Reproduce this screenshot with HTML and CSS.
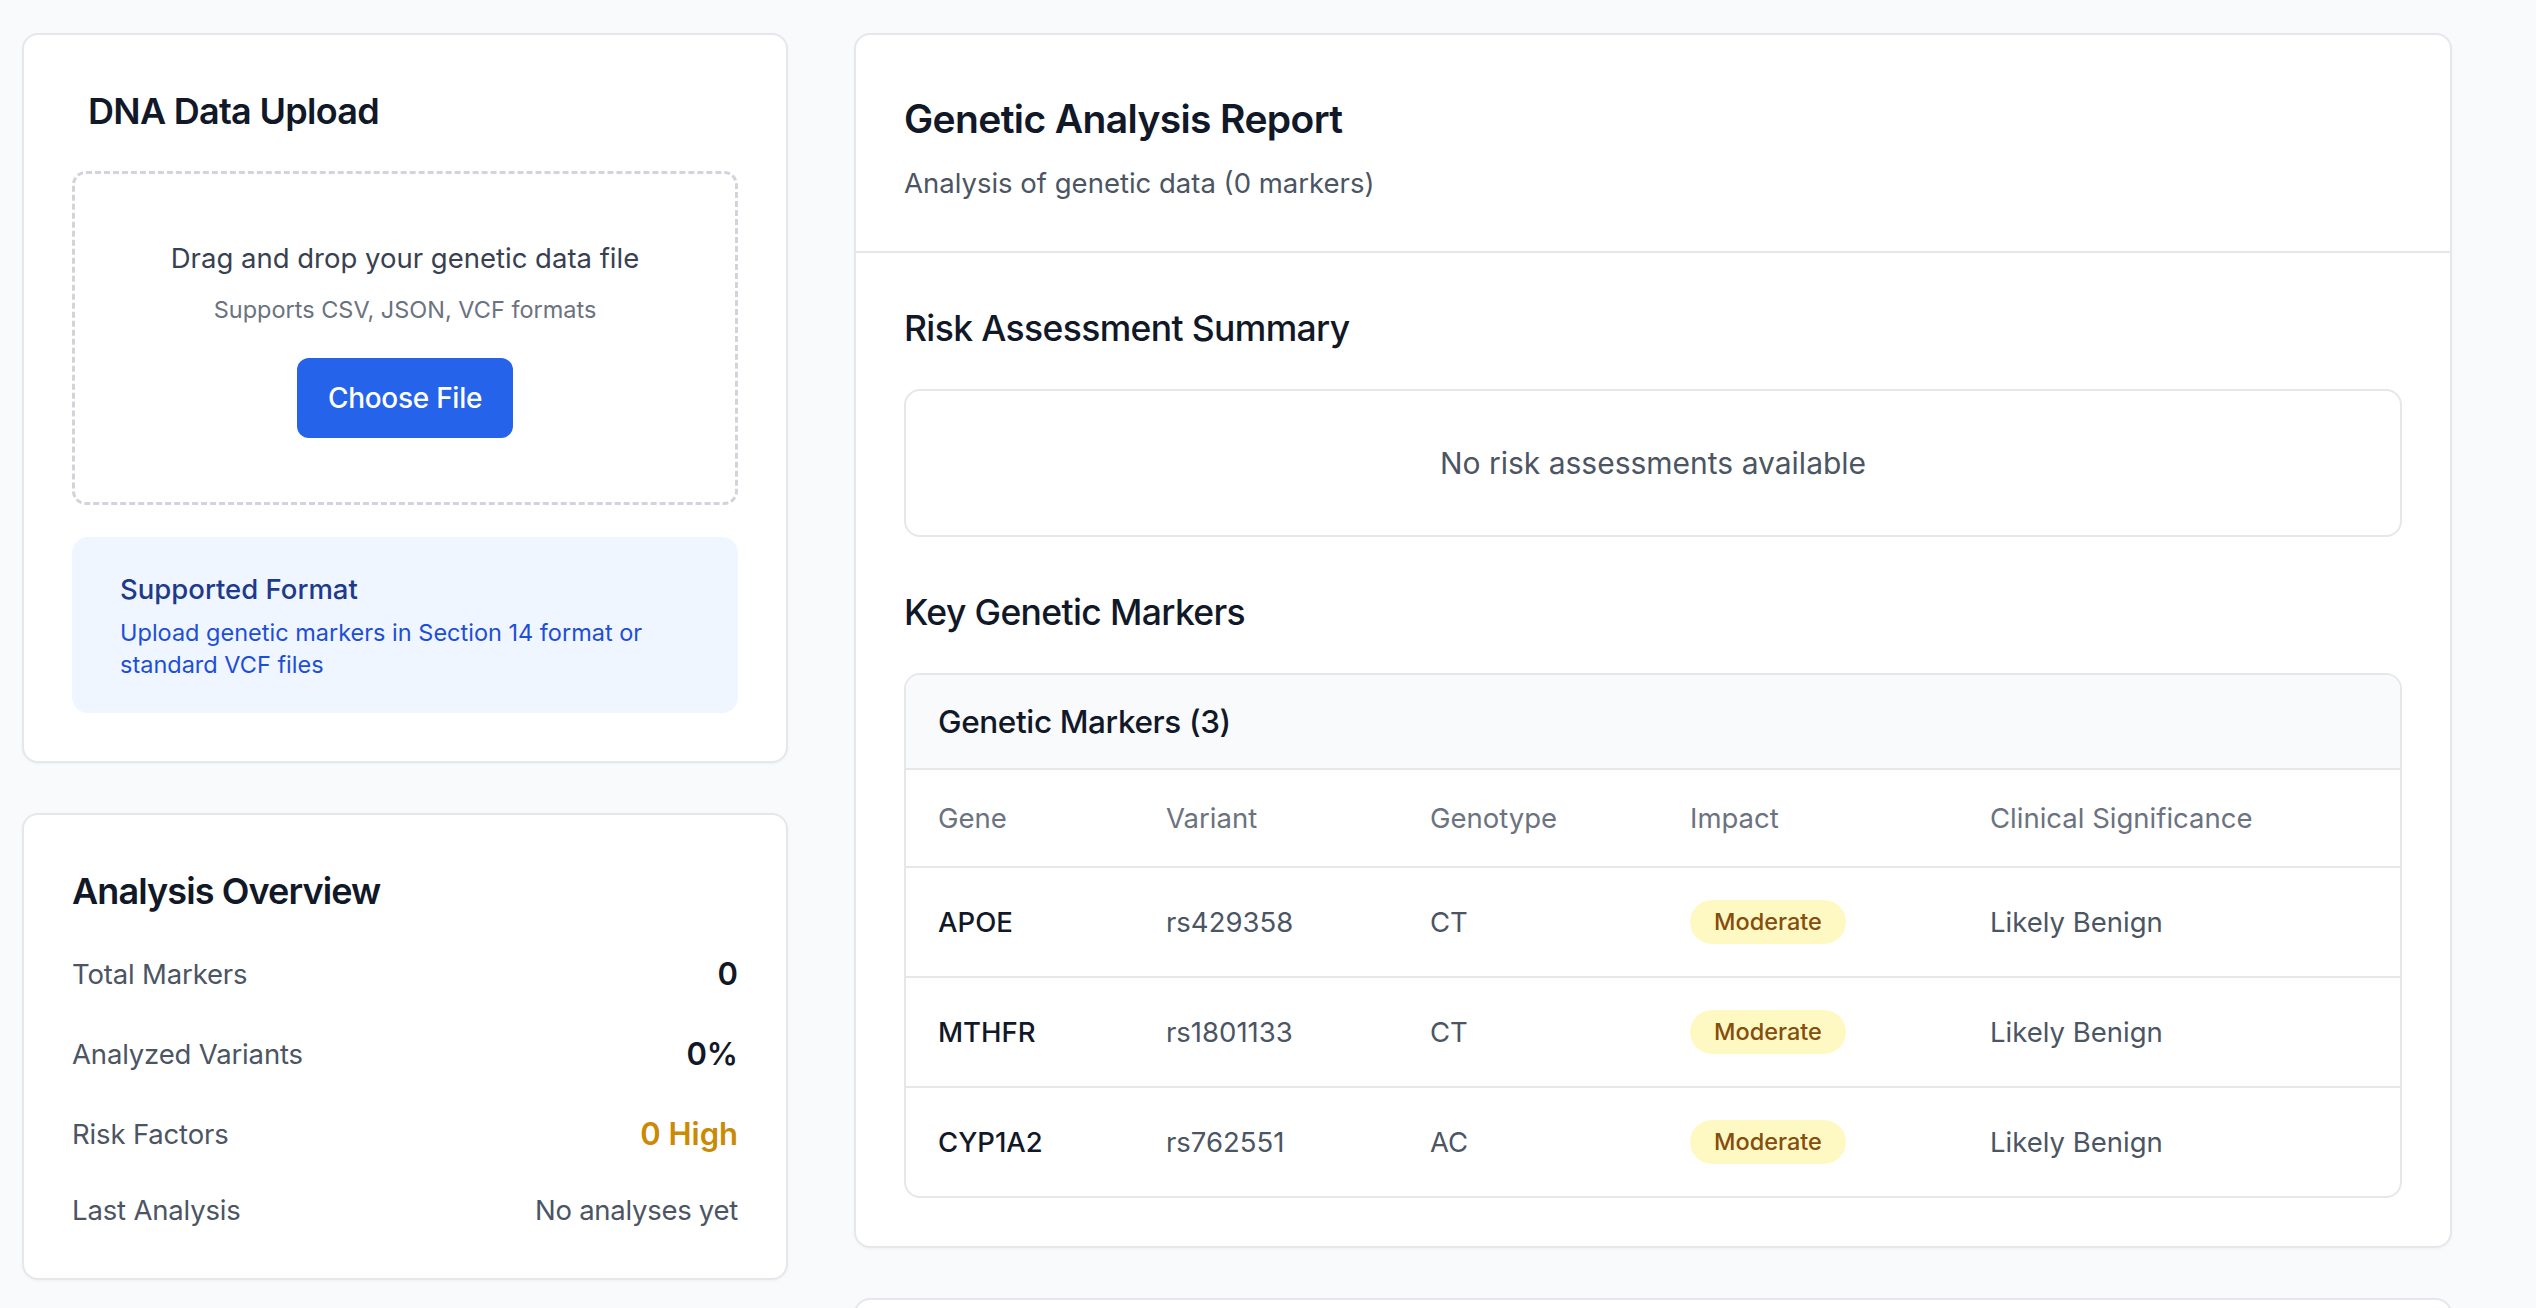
FILE: index.html
```html
<!DOCTYPE html>
<html lang="en">
<head>
<meta charset="utf-8">
<title>Genetic Analysis</title>
<link rel="stylesheet" href="styles.css">
</head>
<body>
<div class="page">
  <div class="col-left">
    <section class="card upload-card">
      <h2 class="upload-title">DNA Data Upload</h2>
      <div class="dropzone">
        <p class="drop-text">Drag and drop your genetic data file</p>
        <p class="drop-sub">Supports CSV, JSON, VCF formats</p>
        <button class="btn-primary" type="button">Choose File</button>
      </div>
      <div class="info-box">
        <h3 class="info-title">Supported Format</h3>
        <p class="info-text">Upload genetic markers in Section 14 format or standard VCF files</p>
      </div>
    </section>

    <section class="card overview-card">
      <h2 class="card-title">Analysis Overview</h2>
      <div class="stats">
        <div class="stat-row">
          <span class="stat-label">Total Markers</span>
          <span class="stat-value">0</span>
        </div>
        <div class="stat-row">
          <span class="stat-label">Analyzed Variants</span>
          <span class="stat-value">0%</span>
        </div>
        <div class="stat-row">
          <span class="stat-label">Risk Factors</span>
          <span class="stat-value stat-warn">0 High</span>
        </div>
        <div class="stat-row">
          <span class="stat-label">Last Analysis</span>
          <span class="stat-muted">No analyses yet</span>
        </div>
      </div>
    </section>
  </div>

  <div class="col-right">
    <section class="card report-card">
      <header class="report-header">
        <h1 class="report-title">Genetic Analysis Report</h1>
        <p class="report-sub">Analysis of genetic data (0 markers)</p>
      </header>
      <div class="report-body">
        <div class="report-section">
          <h2 class="section-title">Risk Assessment Summary</h2>
          <div class="empty-box">No risk assessments available</div>
        </div>
        <div class="report-section">
          <h2 class="section-title">Key Genetic Markers</h2>
          <div class="table-box">
            <div class="table-head">Genetic Markers (3)</div>
            <table class="markers">
              <colgroup>
                <col class="c-gene">
                <col class="c-variant">
                <col class="c-geno">
                <col class="c-impact">
                <col>
              </colgroup>
              <thead>
                <tr>
                  <th>Gene</th>
                  <th>Variant</th>
                  <th>Genotype</th>
                  <th>Impact</th>
                  <th>Clinical Significance</th>
                </tr>
              </thead>
              <tbody>
                <tr>
                  <td class="gene">APOE</td>
                  <td>rs429358</td>
                  <td>CT</td>
                  <td><span class="badge">Moderate</span></td>
                  <td>Likely Benign</td>
                </tr>
                <tr>
                  <td class="gene">MTHFR</td>
                  <td>rs1801133</td>
                  <td>CT</td>
                  <td><span class="badge">Moderate</span></td>
                  <td>Likely Benign</td>
                </tr>
                <tr>
                  <td class="gene">CYP1A2</td>
                  <td>rs762551</td>
                  <td>AC</td>
                  <td><span class="badge">Moderate</span></td>
                  <td>Likely Benign</td>
                </tr>
              </tbody>
            </table>
          </div>
        </div>
      </div>
    </section>

    <section class="card next-card"></section>
  </div>
</div>
</body>
</html>
```

FILE: styles.css
```css
* { box-sizing: border-box; }

html, body {
  margin: 0;
  padding: 0;
  overflow: hidden;
  background: #f9fafb;
}

body {
  font-family: Inter, "Noto Sans", "Liberation Sans", sans-serif;
  color: #111827;
}

h1, h2, h3, p { margin: 0; }

.page {
  display: grid;
  grid-template-columns: repeat(3, 1fr);
  column-gap: 66px;
  padding: 33px 84px 0 22px;
  align-items: start;
}

.col-left {
  display: flex;
  flex-direction: column;
  gap: 50px;
}

.col-right {
  grid-column: span 2;
  display: flex;
  flex-direction: column;
  gap: 50px;
}

.card {
  background: #ffffff;
  border: 2px solid #e5e7eb;
  border-radius: 16px;
  box-shadow: 0 1px 3px rgba(0, 0, 0, 0.04);
}

/* Upload card */
.upload-card { padding: 48px; }

.upload-title {
  padding: 0 16px;
  font-size: 36px;
  line-height: 56px;
  font-weight: 600;
  letter-spacing: -0.02em;
  color: #111827;
  margin-bottom: 32px;
}

.dropzone {
  border: 3px dashed #d1d5db;
  border-radius: 14px;
  padding: 64px 32px;
  display: flex;
  flex-direction: column;
  align-items: center;
  text-align: center;
}

.drop-text {
  font-size: 27.5px;
  line-height: 40px;
  color: #374151;
}

.drop-sub {
  margin-top: 16px;
  font-size: 23.5px;
  line-height: 32px;
  color: #6b7280;
}

.btn-primary {
  margin-top: 32px;
  font-family: inherit;
  font-size: 28px;
  line-height: 40px;
  font-weight: 500;
  letter-spacing: -0.01em;
  color: #ffffff;
  background: #2563eb;
  border: none;
  border-radius: 12px;
  padding: 20px 31px;
}

.info-box {
  margin-top: 32px;
  background: #eff6ff;
  border-radius: 16px;
  padding: 32px 48px;
}

.info-title {
  font-size: 27.5px;
  line-height: 40px;
  font-weight: 500;
  color: #1e3a8a;
}

.info-text {
  margin-top: 8px;
  font-size: 23.5px;
  line-height: 32px;
  color: #1d4ed8;
}

/* Overview card */
.overview-card { padding: 48px; }

.card-title {
  font-size: 36px;
  line-height: 56px;
  font-weight: 600;
  letter-spacing: -0.025em;
  color: #111827;
  margin-bottom: 31px;
}

.stats {
  display: flex;
  flex-direction: column;
  gap: 32px;
}

.stat-row {
  display: flex;
  justify-content: space-between;
  align-items: center;
}

.stat-label {
  font-size: 27.5px;
  line-height: 40px;
  letter-spacing: -0.006em;
  color: #4b5563;
}

.stat-value {
  font-size: 31px;
  line-height: 48px;
  font-weight: 600;
  color: #111827;
}

.stat-warn { color: #ca8a04; }

.stat-muted {
  font-size: 27.5px;
  line-height: 40px;
  letter-spacing: -0.01em;
  color: #4b5563;
}

/* Report card */
.report-header {
  padding: 48px;
  border-bottom: 2px solid #e5e7eb;
}

.report-title {
  font-size: 39px;
  line-height: 72px;
  font-weight: 600;
  letter-spacing: -0.016em;
  color: #111827;
}

.report-sub {
  margin-top: 8px;
  font-size: 27.5px;
  line-height: 40px;
  color: #4b5563;
}

.report-body {
  padding: 48px;
  display: flex;
  flex-direction: column;
  gap: 48px;
}

.section-title {
  font-size: 35.5px;
  line-height: 56px;
  font-weight: 500;
  letter-spacing: -0.018em;
  color: #111827;
  margin-bottom: 32px;
}

.empty-box {
  border: 2px solid #e5e7eb;
  border-radius: 16px;
  padding: 48px;
  text-align: center;
  font-size: 30px;
  line-height: 48px;
  color: #4b5563;
}

.table-box {
  border: 2px solid #e5e7eb;
  border-radius: 16px;
  overflow: hidden;
}

.table-head {
  background: #f9fafb;
  border-bottom: 2px solid #e5e7eb;
  padding: 23px 32px 22px;
  font-size: 31.5px;
  line-height: 48px;
  font-weight: 500;
  letter-spacing: -0.012em;
  color: #111827;
}

.markers {
  width: 100%;
  border-collapse: collapse;
  table-layout: fixed;
}

.c-gene { width: 228px; }
.c-variant { width: 264px; }
.c-geno { width: 260px; }
.c-impact { width: 300px; }

.markers th {
  text-align: left;
  font-weight: 400;
  font-size: 27.5px;
  line-height: 48px;
  color: #6b7280;
  padding: 24px 32px;
  border-bottom: 2px solid #e5e7eb;
}

.markers td {
  font-size: 27.5px;
  line-height: 44px;
  color: #4b5563;
  padding: 32px;
  border-bottom: 2px solid #e5e7eb;
  vertical-align: middle;
}

.markers tbody tr:last-child td { border-bottom: none; }

.markers td.gene {
  font-weight: 500;
  color: #111827;
}

.badge {
  display: inline-block;
  vertical-align: top;
  padding: 6px 24px;
  border-radius: 999px;
  background: #fef9c3;
  color: #854d0e;
  font-size: 23.5px;
  line-height: 32px;
  font-weight: 500;
}

.next-card {
  min-height: 240px;
}
```
